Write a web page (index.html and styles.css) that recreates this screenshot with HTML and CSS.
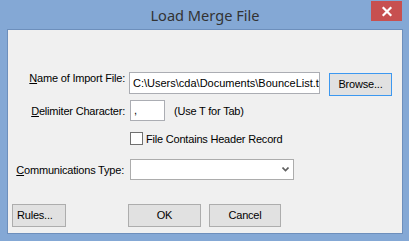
FILE: index.html
```html
<!DOCTYPE html>
<html>
<head>
<meta charset="utf-8">
<link rel="stylesheet" href="styles.css">
</head>
<body>
<div class="window">
  <div class="titlebar">
    <span class="spacer"></span>
    <span class="title">Load Merge File</span>
    <span class="close"><svg width="31" height="20" viewBox="0 0 31 20"><path d="M12.5 7 L19.5 14 M19.5 7 L12.5 14" stroke="#fff" stroke-width="2.2" stroke-linecap="square"/></svg></span>
  </div>
  <div class="client">
    <div class="row row1">
      <label class="lbl"><u>N</u>ame of Import File:</label>
      <div class="input file">C:\Users\cda\Documents\BounceList.txt</div>
      <div class="btn browse">Browse...</div>
    </div>
    <div class="row row2">
      <label class="lbl"><u>D</u>elimiter Character:</label>
      <div class="input delim">,</div>
      <span class="hint">(Use T for Tab)</span>
    </div>
    <div class="row row3">
      <span class="check"></span>
      <span class="checklbl">File Contains Header Record</span>
    </div>
    <div class="row row4">
      <label class="lbl lbl4"><u>C</u>ommunications Type:</label>
      <div class="combo"><svg class="chev" width="7" height="5" viewBox="0 0 7 5"><path d="M0.5 0.5 L3.5 3.5 L6.5 0.5" fill="none" stroke="#606060" stroke-width="1.6"/></svg></div>
    </div>
    <div class="row buttons">
      <div class="btn rules">Rules...</div>
      <div class="btn ok">OK</div>
      <div class="btn cancel">Cancel</div>
    </div>
  </div>
</div>
</body>
</html>
```
FILE: styles.css
```css
html, body {
  margin: 0;
  padding: 0;
  background: #84a8d5;
}
.window {
  width: 409px;
  height: 241px;
  box-sizing: border-box;
  background: #84a8d5;
  padding: 0 6px 7px 7px;
  display: flex;
  flex-direction: column;
  font-family: "Liberation Sans", Arial, sans-serif;
  font-size: 11px;
  letter-spacing: -0.2px;
  color: #000;
}
.titlebar {
  height: 29px;
  display: grid;
  grid-template-columns: 1fr auto 1fr;
  align-items: start;
}
.title {
  font-family: "Noto Sans", "Open Sans", sans-serif;
  font-size: 14.6px;
  letter-spacing: 0;
  color: #333;
  line-height: 20px;
  padding-top: 5px;
}
.close {
  justify-self: end;
  width: 31px;
  height: 20px;
  margin-top: 1px;
  margin-right: 1px;
  background: #c75050;
  display: block;
}
.close svg { display: block; }
.client {
  flex: 1;
  background: #f0f0f0;
  border: 1px solid #6d8fbc;
  padding-top: 42px;
  display: flex;
  flex-direction: column;
}
.row {
  display: flex;
  align-items: center;
}
.lbl {
  width: 117px;
  text-align: right;
  flex: none;
  white-space: nowrap;
}
.lbl u { text-decoration: underline; text-underline-offset: 1px; }
.input {
  box-sizing: border-box;
  background: #fff;
  border: 1px solid #abadb3;
  height: 22px;
  line-height: 20px;
  padding-left: 3px;
  white-space: nowrap;
  overflow: hidden;
  flex: none;
  letter-spacing: 0;
}
.file {
  margin-left: 4px;
  width: 191px;
}
.btn {
  box-sizing: border-box;
  height: 23px;
  border: 1px solid #adadad;
  background: #e1e1e1;
  text-align: center;
  line-height: 21px;
  flex: none;
}
.browse {
  margin-left: 9px;
  width: 63px;
  border-color: #3c98f0;
  margin-top: 1px;
}
.row1 { align-items: flex-start; }
.row2 { margin-top: 4px; }
.delim {
  margin-left: 5px;
  width: 35px;
  height: 21px;
  line-height: 19px;
}
.hint { margin-left: 9px; }
.row3 { margin-top: 11px; }
.check {
  box-sizing: border-box;
  width: 13px;
  height: 13px;
  border: 1px solid #707070;
  background: #fff;
  margin-left: 122px;
}
.checklbl { margin-left: 3px; }
.row4 { margin-top: 14px; }
.lbl4 { width: 116px; }
.combo {
  box-sizing: border-box;
  margin-left: 6px;
  width: 164px;
  height: 21px;
  background: #fff;
  border: 1px solid #acacac;
  display: flex;
  align-items: center;
  justify-content: flex-end;
  padding-right: 4px;
}
.chev { display: block; }
.buttons { margin-top: 24px; align-items: flex-start; }
.rules { margin-left: 4px; width: 54px; text-align: left; padding-left: 4px; }
.ok { margin-left: 62px; width: 73px; }
.cancel { margin-left: 8px; width: 72px; }
```
